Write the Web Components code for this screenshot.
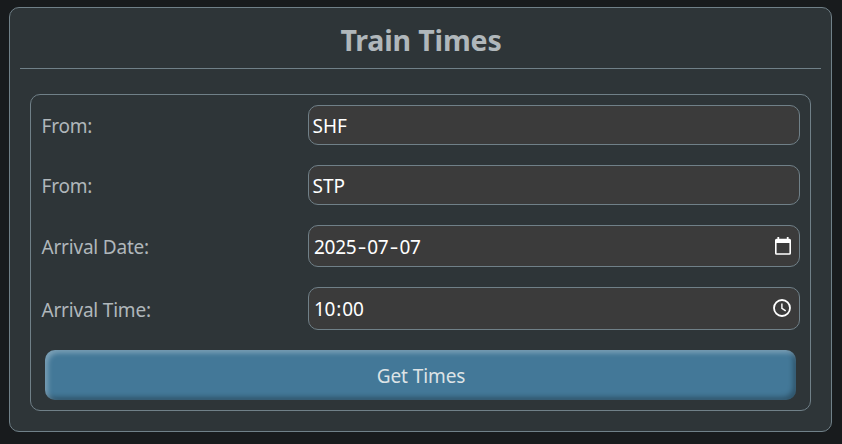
<!DOCTYPE html>
<html lang="en">
<head>
<meta charset="utf-8">
<title>Train Times</title>
<style>
  html {
    height: 100%;
    background: #181b1d;
  }

  body {
    box-sizing: border-box;
    height: 444px;
    margin: 0;
    padding: 7px 10px 12px 9px;
    overflow: hidden;
    color: #b0b7bb;
    font-family: "Segoe UI", "Noto Sans", sans-serif;
    font-size: 19px;
  }
</style>
</head>
<body>
  <train-card heading="Train Times">
    <train-form>
      <form-row label="From:">
        <field-box value="SHF"></field-box>
      </form-row>
      <form-row label="From:">
        <field-box value="STP"></field-box>
      </form-row>
      <form-row label="Arrival Date:">
        <field-box type="date" value="2025-07-07"></field-box>
      </form-row>
      <form-row label="Arrival Time:">
        <field-box type="time" value="10:00"></field-box>
      </form-row>
      <submit-button>Get Times</submit-button>
    </train-form>
  </train-card>

<script>
class TrainCard extends HTMLElement {
  constructor() {
    super();
    this.attachShadow({ mode: "open" });
  }

  connectedCallback() {
    this.shadowRoot.innerHTML = `
      <style>
        :host {
          display: block;
          box-sizing: border-box;
          height: 425px;
          padding: 0 10px;
          border: 1px solid #708088;
          border-radius: 10px;
          background: #2e3538;
        }

        h1 {
          box-sizing: border-box;
          height: 61px;
          margin: 0;
          padding: 11px 0 0 1px;
          border-bottom: 1px solid #708088;
          font-size: 28.5px;
          letter-spacing: -0.15px;
          line-height: 42px;
          text-align: center;
        }

        .content {
          padding: 25px 10px 0;
        }
      </style>
      <h1>${this.getAttribute("heading")}</h1>
      <div class="content"><slot></slot></div>
    `;
  }
}

class TrainForm extends HTMLElement {
  constructor() {
    super();
    this.attachShadow({ mode: "open" });
  }

  connectedCallback() {
    this.shadowRoot.innerHTML = `
      <style>
        :host {
          display: flex;
          flex-direction: column;
          gap: 20px;
          box-sizing: border-box;
          height: 317px;
          padding: 10px;
          border: 1px solid #708088;
          border-radius: 10px;
        }
      </style>
      <slot></slot>
    `;
  }
}

class FormRow extends HTMLElement {
  constructor() {
    super();
    this.attachShadow({ mode: "open" });
  }

  connectedCallback() {
    this.shadowRoot.innerHTML = `
      <style>
        :host {
          display: grid;
          grid-template-columns: 267px 1fr;
          align-items: center;
        }

        .label {
          padding: 2px 0 0 0.5px;
          letter-spacing: -0.2px;
          line-height: 26px;
        }
      </style>
      <span class="label">${this.getAttribute("label")}</span>
      <slot></slot>
    `;
  }
}

class FieldBox extends HTMLElement {
  constructor() {
    super();
    this.attachShadow({ mode: "open" });
  }

  get icon() {
    switch (this.getAttribute("type")) {
      case "date":
        return `
          <svg width="16" height="18" viewBox="0 0 16 18">
            <path fill="#fff" fill-rule="evenodd" d="M2.4 0h1.8v1.7h7.6V0h1.8v1.7h.9A1.5 1.5 0 0 1 16 3.2v13.1a1.5 1.5 0 0 1-1.5 1.5h-13A1.5 1.5 0 0 1 0 16.3V3.2a1.5 1.5 0 0 1 1.5-1.5h.9zM1.6 6v10.2h12.8V6z"/>
          </svg>`;
      case "time":
        return `
          <svg width="18" height="18" viewBox="0 0 18 18" fill="none" stroke="#fff">
            <circle cx="9" cy="9" r="8" stroke-width="1.8"/>
            <path d="M8.9 4.5v4.9l3.8 2.5" stroke-width="1.4"/>
          </svg>`;
      default:
        return "";
    }
  }

  // Date and time separators get some room around them
  get text() {
    const value = this.getAttribute("value");
    return this.hasAttribute("type")
      ? value.replace(/[-:]/g, "<span class=\"sep\">$&</span>")
      : value;
  }

  connectedCallback() {
    this.shadowRoot.innerHTML = `
      <style>
        :host {
          display: flex;
          align-items: center;
          justify-content: space-between;
          box-sizing: border-box;
          height: 40px;
          padding: 0 8px 0 3.5px;
          border: 1px solid #708088;
          border-radius: 10px;
          background: #3b3b3b;
          color: #fff;
        }

        :host([type="date"]) {
          height: 42px;
          padding-left: 5px;
        }

        :host([type="time"]) {
          height: 43px;
          padding: 0 8.5px 1px 5px;
        }

        .value {
          padding-top: 2px;
          line-height: 26px;
        }

        :host([type]) .value {
          letter-spacing: -0.3px;
        }

        .sep {
          display: inline-block;
          margin: 0 1.2px;
        }

        :host([type="date"]) .sep {
          margin: 0 2.6px;
          transform: scaleX(1.4);
        }

        svg {
          display: block;
        }
      </style>
      <span class="value">${this.text}</span>
      ${this.icon}
    `;
  }
}

class SubmitButton extends HTMLElement {
  constructor() {
    super();
    this.attachShadow({ mode: "open" });
  }

  connectedCallback() {
    this.shadowRoot.innerHTML = `
      <style>
        :host {
          display: block;
          margin: 0 4px;
        }

        button {
          display: block;
          width: 100%;
          height: 50px;
          padding: 2px 0 0 1px;
          border: 0;
          border-radius: 10px;
          background: #437898;
          box-shadow:
            inset 3px 3px 5px rgba(255, 255, 255, 0.3),
            inset -3px -3px 5px rgba(0, 0, 0, 0.3);
          color: #dde3e6;
          font: inherit;
          letter-spacing: -0.1px;
        }
      </style>
      <button type="button"><slot></slot></button>
    `;
  }
}

customElements.define("train-card", TrainCard);
customElements.define("train-form", TrainForm);
customElements.define("form-row", FormRow);
customElements.define("field-box", FieldBox);
customElements.define("submit-button", SubmitButton);
</script>
</body>
</html>
